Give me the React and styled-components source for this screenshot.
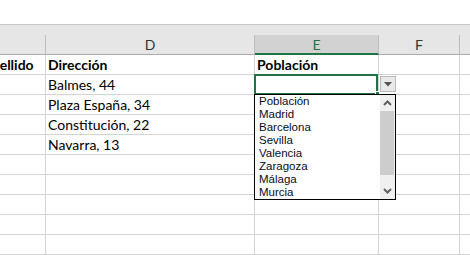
import React from "react";
import styled, { createGlobalStyle } from "styled-components";

const GREEN = "#217346";

const Global = createGlobalStyle`
  html, body { margin: 0; padding: 0; background: #ffffff; overflow: hidden; }
  #root { width: 470px; height: 255px; overflow: hidden; }
`;

const Page = styled.div`
  width: 470px;
  height: 255px;
  overflow: hidden;
  background: #ffffff;
  display: flex;
  flex-direction: column;
`;

const TopSpace = styled.div`
  height: 24px;
  flex: none;
  background: #ffffff;
`;

const Band = styled.div`
  height: 10px;
  flex: none;
  background: #e6e6e6;
  border-top: 1px solid #c6c6c6;
`;

const Grid = styled.div`
  display: grid;
  grid-template-columns: 66px 209px 124px 81px 40px;
  grid-auto-rows: 20px;
  margin-left: -20px;
  font-family: Lato, "Liberation Sans", sans-serif;
`;

const ColHeader = styled.div`
  box-sizing: border-box;
  background: ${(p) => (p.$active ? "#d2d2d2" : "#e6e6e6")};
  border-right: 1px solid #bdbdbd;
  border-bottom: ${(p) => (p.$active ? `2px solid ${GREEN}` : "1px solid #ababab")};
  color: ${(p) => (p.$active ? GREEN : "#333333")};
  font-size: 14px;
  line-height: 18px;
  display: flex;
  align-items: center;
  justify-content: center;
  padding-top: ${(p) => (p.$active ? "1px" : "0")};
`;

const Cell = styled.div`
  box-sizing: border-box;
  position: relative;
  border-right: 1px solid #d4d4d4;
  border-bottom: 1px solid #d4d4d4;
  display: flex;
  align-items: flex-end;
  padding: 0 0 1px 2px;
  font-size: 14px;
  line-height: 16px;
  font-weight: ${(p) => (p.$bold ? 700 : 400)};
  color: #000000;
  white-space: nowrap;
  overflow: ${(p) => (p.$open ? "visible" : "hidden")};
`;

const ActiveFrame = styled.div`
  position: absolute;
  left: -1px;
  top: -1px;
  width: 124px;
  height: 21px;
  box-sizing: border-box;
  border: 2px solid ${GREEN};
  pointer-events: none;
  z-index: 2;
`;

const FillHandle = styled.div`
  position: absolute;
  left: 120px;
  top: 16px;
  width: 5px;
  height: 5px;
  box-sizing: border-box;
  background: ${GREEN};
  border: 1px solid #ffffff;
  z-index: 3;
`;

const DropButton = styled.div`
  position: absolute;
  left: 125px;
  top: 1px;
  width: 16px;
  height: 16px;
  box-sizing: border-box;
  border: 1px solid #b9b9b9;
  background: #e9e9e9;
  display: flex;
  align-items: center;
  justify-content: center;
  z-index: 3;
`;

const ListBox = styled.div`
  position: absolute;
  left: -1px;
  top: 19px;
  width: 142px;
  height: 106px;
  box-sizing: border-box;
  border: 1px solid #000000;
  background: #ffffff;
  display: flex;
  z-index: 4;
`;

const Items = styled.ul`
  list-style: none;
  margin: 0;
  padding: 0;
  flex: 1;
  font-family: "Liberation Sans", Arial, sans-serif;
  font-size: 11.5px;
  line-height: 13px;
  color: #0a0a1a;
`;

const Item = styled.li`
  padding-left: 4px;
  height: 13px;
  white-space: nowrap;
`;

const Scrollbar = styled.div`
  width: 15px;
  flex: none;
  background: #f0f0f0;
  display: flex;
  flex-direction: column;
`;

const ScrollArrow = styled.div`
  height: 16px;
  flex: none;
  display: flex;
  align-items: center;
  justify-content: center;
`;

const Thumb = styled.div`
  height: 64px;
  margin: 0 1px 0 0;
  background: #cdcdcd;
  flex: none;
`;

const Track = styled.div`
  flex: 1;
`;

const Chevron = ({ up }) => (
  <svg width="9" height="6" viewBox="0 0 9 6">
    <polyline
      points={up ? "1,5 4.5,1.5 8,5" : "1,1 4.5,4.5 8,1"}
      fill="none"
      stroke="#606060"
      strokeWidth="2"
    />
  </svg>
);

const cities = [
  "Población",
  "Madrid",
  "Barcelona",
  "Sevilla",
  "Valencia",
  "Zaragoza",
  "Málaga",
  "Murcia",
];

const rows = [
  ["Apellido", "Dirección", "Población"],
  ["", "Balmes, 44", ""],
  ["", "Plaza España, 34", ""],
  ["", "Constitución, 22", ""],
  ["", "Navarra, 13", ""],
  ["", "", ""],
  ["", "", ""],
  ["", "", ""],
  ["", "", ""],
  ["", "", ""],
];

export default function App() {
  return (
    <Page>
      <Global />
      <TopSpace />
      <Band />
      <Grid>
        <ColHeader />
        <ColHeader>D</ColHeader>
        <ColHeader $active>E</ColHeader>
        <ColHeader>F</ColHeader>
        <ColHeader />
        {rows.map((r, i) => (
          <React.Fragment key={i}>
            <Cell $bold={i === 0}>{r[0]}</Cell>
            <Cell $bold={i === 0}>{r[1]}</Cell>
            {i === 1 ? (
              <Cell $open>
                <ActiveFrame />
                <FillHandle />
                <DropButton>
                  <svg width="8" height="5" viewBox="0 0 8 5">
                    <polygon points="0,0 8,0 4,4.5" fill="#555555" />
                  </svg>
                </DropButton>
                <ListBox>
                  <Items>
                    {cities.map((c) => (
                      <Item key={c}>{c}</Item>
                    ))}
                  </Items>
                  <Scrollbar>
                    <ScrollArrow>
                      <Chevron up />
                    </ScrollArrow>
                    <Thumb />
                    <Track />
                    <ScrollArrow>
                      <Chevron />
                    </ScrollArrow>
                  </Scrollbar>
                </ListBox>
              </Cell>
            ) : (
              <Cell $bold={i === 0}>{r[2]}</Cell>
            )}
            <Cell />
            <Cell />
          </React.Fragment>
        ))}
      </Grid>
    </Page>
  );
}
